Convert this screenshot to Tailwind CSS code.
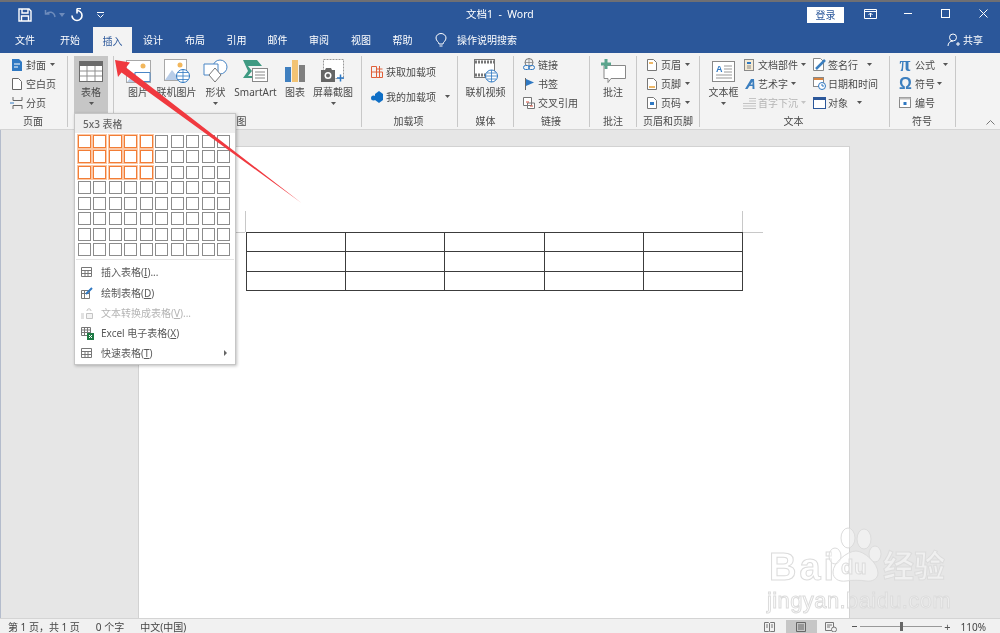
<!DOCTYPE html>
<html lang="zh-CN">
<head>
  <meta charset="UTF-8">
  <title>文档1 - Word</title>
  <script src="https://cdn.jsdelivr.net/npm/@tailwindcss/browser@4"></script>
</head>
<body class="relative w-[1000px] h-[633px] overflow-hidden bg-[#e6e6e6] text-[10px] leading-[12px] text-[#4a4a4a] font-['Noto_Sans','Noto_Sans_CJK_SC',sans-serif] blur-[0.35px]">
  <div class="flex flex-col h-full">

    <!-- Title bar -->
    <header class="relative h-[27px] flex items-center bg-[#2b579a] text-white border-t-2 border-[#6f6f73]">
      <svg class="ml-[18px] w-[14px] h-[14px]" viewBox="0 0 14 14" fill="none" stroke="#fff" stroke-width="1.4"><path d="M1 1h10l2 2v10H1zM4 1v4h6V1M3.500 13V8h7v5"/></svg>
      <svg class="ml-[12px] w-[14px] h-[12px]" viewBox="0 0 14 12" fill="none" stroke="#6d8bbb" stroke-width="1.5"><path d="M1.500 1v4h4M2 5c3-3 8-2.500 9 3"/></svg>
      <svg class="ml-[1px] w-[6px] h-[4px]" viewBox="0 0 6 4" fill="#6d8bbb"><path d="M0 0h6L3 4z"/></svg>
      <svg class="ml-[5px] w-[13px] h-[14px]" viewBox="0 0 13 14" fill="none" stroke="#fff" stroke-width="1.6"><path d="M7 2.500a5 5 0 1 1-5 5M7 .5v5M7 .5l4 0"/></svg>
      <svg class="ml-[14px] w-[7px] h-[6px]" viewBox="0 0 7 6" fill="none" stroke="#fff"><path d="M0 .5h7M.5 2.500 3.500 5.500 6.500 2.500"/></svg>
      <div class="absolute left-[466px] top-[6px] text-[10.5px] whitespace-pre">文档1  -  Word</div>
      <div class="absolute left-[807px] top-[5px] w-[37px] h-[16px] bg-white text-[#2b579a] flex items-center justify-center">登录</div>
      <svg class="absolute left-[864px] top-[7px] w-[13px] h-[11px]" viewBox="0 0 13 11" fill="none" stroke="#fff"><path d="M.5.5h12v9H.5zM.5 2.500h12"/><path d="M6.500 8V4M4.500 6l2-2 2 2"/></svg>
      <div class="absolute left-[904px] top-[11px] w-[8px] h-px bg-white"></div>
      <div class="absolute left-[941px] top-[7px] w-[9px] h-[9px] border border-white"></div>
      <svg class="absolute left-[979px] top-[7px] w-[9px] h-[9px]" viewBox="0 0 9 9" stroke="#fff"><path d="M.5.5l8 8M8.500.5l-8 8"/></svg>
    </header>

    <!-- Tabs -->
    <nav class="relative h-[26px] flex items-center bg-[#2b579a] text-white">
      <div class="ml-[4px] w-[42px] text-center">文件</div>
      <div class="ml-[3px] w-[42px] text-center">开始</div>
      <div class="ml-[2px] w-[39px] h-[26px] pt-[8px] bg-[#f3f3f3] text-[#2b579a] text-center">插入</div>
      <div class="w-[42px] text-center">设计</div>
      <div class="w-[42px] text-center">布局</div>
      <div class="w-[41px] text-center">引用</div>
      <div class="w-[41px] text-center">邮件</div>
      <div class="w-[42px] text-center">审阅</div>
      <div class="w-[42px] text-center">视图</div>
      <div class="w-[41px] text-center">帮助</div>
      <svg class="ml-[12px] w-[12px] h-[15px]" viewBox="0 0 12 15" fill="none" stroke="#fff"><path d="M4 11c0-2-3-3-3-6a5 4.500 0 0 1 10 0c0 3-3 4-3 6zM4.500 13h3"/></svg>
      <div class="ml-[10px]">操作说明搜索</div>
      <div class="ml-auto mr-[17px] flex items-center gap-[3px]">
        <svg class="w-[13px] h-[14px]" viewBox="0 0 13 14" fill="none" stroke="#fff"><circle cx="6" cy="4.500" r="3.500"/><path d="M1 13c0-3 2-5 5-5M9 11h4M11 9v4"/></svg>
        共享
      </div>
    </nav>

    <!-- Ribbon -->
    <section class="relative h-[77px] flex items-start pt-[3px] bg-[#f3f3f3] border-b border-[#d4d4d4]">

      <!-- 页面 -->
      <div class="w-[68px] h-[71px] flex flex-col border-r border-[#c8c8c8]">
        <div class="h-[60px] -mt-[1px] pl-[12px]">
          <div class="h-[19px] flex items-center gap-[4px]">
            <svg class="w-[10px] h-[12px]" viewBox="0 0 10 12"><path d="M0 0h7l3 3v9H0z" fill="#2f78c2"/><path d="M2 5h6M2 8h4" stroke="#fff"/></svg>
            <span>封面</span><svg class="w-[5px] h-[3px]" viewBox="0 0 5 3" fill="#555"><path d="M0 0h5L2.500 3z"/></svg>
          </div>
          <div class="h-[19px] flex items-center gap-[4px]">
            <svg class="w-[10px] h-[12px]" viewBox="0 0 10 12" fill="#fff" stroke="#666"><path d="M.5.5h6l3 3v8H.5z"/></svg>
            <span>空白页</span>
          </div>
          <div class="h-[19px] flex items-center gap-[3px] -ml-[2px]">
            <svg class="w-[13px] h-[12px]" viewBox="0 0 13 12" fill="none" stroke="#666"><path d="M3 0v3.500h9V0M3 12V8.500h9V12"/><path d="M0 6h4" stroke="#2f78c2"/></svg>
            <span>分页</span>
          </div>
        </div>
        <div class="h-[12px] text-center pr-[1px]">页面</div>
      </div>

      <!-- 表格 -->
      <div class="w-[46px] h-[71px] border-r border-[#c8c8c8]">
        <div class="ml-[6px] w-[34px] h-[57px] bg-[#c6c6c6] flex flex-col items-center">
          <div class="h-[30px] flex items-center">
            <svg class="w-[24px] h-[21px]" viewBox="0 0 24 21"><rect width="24" height="21" fill="#6b6b6b"/><rect x="1" y="5" width="22" height="15" fill="#fff"/><path d="M8 5v15M16 5v15M1 10h22M1 15h22" stroke="#8f8f8f"/></svg>
          </div>
          <div>表格</div>
          <svg class="w-[5px] h-[3px] mt-[4px]" viewBox="0 0 5 3" fill="#555"><path d="M0 0h5L2.500 3z"/></svg>
        </div>
      </div>

      <!-- 插图 -->
      <div class="w-[248px] h-[71px] flex flex-col border-r border-[#c8c8c8]">
        <div class="h-[59px] flex pl-[5px]">
          <div class="w-[38px] flex flex-col items-center">
            <div class="h-[30px] flex items-center">
              <svg class="w-[25px] h-[23px]" viewBox="0 0 25 23"><rect x=".5" y=".5" width="24" height="22" fill="#fff" stroke="#a8a8a8"/><circle cx="17" cy="6" r="2.500" fill="#f2b75c"/><path d="M1 22l8-10 7 10z" fill="#b8cde8"/><path d="M9 12.500h15v9H9z" fill="#fff" stroke="#4a86c5"/></svg>
            </div>
            <div>图片</div>
          </div>
          <div class="w-[39px] flex flex-col items-center">
            <div class="h-[30px] flex items-center">
              <svg class="w-[26px] h-[24px]" viewBox="0 0 26 24"><rect x=".5" y=".5" width="22" height="21" fill="#fff" stroke="#a8a8a8"/><circle cx="16" cy="6" r="2.500" fill="#f2b75c"/><path d="M1 21l7-10 8 10z" fill="#b8cde8"/><circle cx="19" cy="17" r="6.500" fill="#fff" stroke="#2f78c2"/><path d="M12.500 17h13M19 10.500v13M14 13.500h10M14 20.500h10" stroke="#2f78c2" stroke-width=".8"/></svg>
            </div>
            <div class="whitespace-nowrap">联机图片</div>
          </div>
          <div class="w-[39px] flex flex-col items-center">
            <div class="h-[30px] flex items-center">
              <svg class="w-[25px] h-[24px]" viewBox="0 0 25 24" fill="#fff" stroke="#4a86c5"><circle cx="17" cy="8" r="7"/><path d="M1 5h14v11H1z"/><path d="M12 9l6 7-6 7-6-7z" stroke="#777"/></svg>
            </div>
            <div>形状</div>
            <svg class="w-[5px] h-[3px] mt-[4px]" viewBox="0 0 5 3" fill="#555"><path d="M0 0h5L2.500 3z"/></svg>
          </div>
          <div class="w-[41px] flex flex-col items-center">
            <div class="h-[30px] flex items-center">
              <svg class="w-[25px] h-[22px]" viewBox="0 0 25 22"><path d="M0 0h14l5 6H5l4 5-4 5h8v2H0l5-7z" fill="#3f9a82"/><rect x="9.500" y="8.500" width="15" height="13" fill="#fff" stroke="#888"/><path d="M12 12h10M12 15h10M12 18h10" stroke="#888"/></svg>
            </div>
            <div>SmartArt</div>
          </div>
          <div class="w-[38px] flex flex-col items-center">
            <div class="h-[30px] flex items-center">
              <svg class="w-[20px] h-[22px]" viewBox="0 0 20 22"><rect x="0" y="7" width="6" height="15" fill="#3f7fbf"/><rect x="7" y="0" width="6" height="22" fill="#f2c374"/><rect x="14" y="5" width="6" height="17" fill="#7f7f7f"/></svg>
            </div>
            <div>图表</div>
          </div>
          <div class="w-[38px] flex flex-col items-center">
            <div class="h-[30px] flex items-center">
              <svg class="w-[24px] h-[24px]" viewBox="0 0 24 24"><rect x="2.500" y=".5" width="20" height="19" fill="#fff" stroke="#999" stroke-dasharray="2 1"/><path d="M0 11h4l1-2h5l1 2h3v12H0z" fill="#666"/><circle cx="7" cy="16.500" r="3.500" fill="#fff"/><circle cx="7" cy="16.500" r="2" fill="#666"/><path d="M16 19h7M19.500 15.500v7" stroke="#2f78c2" stroke-width="1.500"/></svg>
            </div>
            <div class="whitespace-nowrap">屏幕截图</div>
            <svg class="w-[5px] h-[3px] mt-[4px]" viewBox="0 0 5 3" fill="#555"><path d="M0 0h5L2.500 3z"/></svg>
          </div>
        </div>
        <div class="h-[12px] text-center pr-[2px]">插图</div>
      </div>

      <!-- 加载项 -->
      <div class="w-[96px] h-[71px] flex flex-col border-r border-[#c8c8c8]">
        <div class="h-[59px] pl-[9px] pt-[3px]">
          <div class="h-[25px] flex items-center gap-[3px]">
            <svg class="w-[12px] h-[12px]" viewBox="0 0 12 12" fill="none" stroke="#e0603a"><path d="M.5.5h5v11h-5zM.5 6h11M5.500 3h6M11.500 6v5.500h-6M8.500 0v12"/></svg>
            <span>获取加载项</span>
          </div>
          <div class="h-[25px] flex items-center gap-[3px]">
            <svg class="w-[12px] h-[12px]" viewBox="0 0 12 12" fill="#0f6fc6"><path d="M4 3l4-3 4 3v6l-4 3-4-3z"/><circle cx="2.500" cy="7" r="2.500"/></svg>
            <span>我的加载项</span><svg class="w-[5px] h-[3px] ml-[6px]" viewBox="0 0 5 3" fill="#555"><path d="M0 0h5L2.500 3z"/></svg>
          </div>
        </div>
        <div class="h-[12px] text-center pr-[2px]">加载项</div>
      </div>

      <!-- 媒体 -->
      <div class="w-[56px] h-[71px] flex flex-col border-r border-[#c8c8c8]">
        <div class="h-[59px] flex flex-col items-center">
          <div class="h-[30px] flex items-center">
            <svg class="w-[24px] h-[24px]" viewBox="0 0 24 24"><rect x=".5" y=".5" width="20" height="18" fill="#fff" stroke="#777"/><path d="M1 3h19M1 16h19" stroke="#777" stroke-width="3" stroke-dasharray="2 1"/><circle cx="17.500" cy="17" r="6" fill="#fff" stroke="#2f78c2"/><path d="M11.500 17h12M17.500 11v12M13 14h9M13 20h9" stroke="#2f78c2" stroke-width=".8"/></svg>
          </div>
          <div class="whitespace-nowrap">联机视频</div>
        </div>
        <div class="h-[12px] text-center">媒体</div>
      </div>

      <!-- 链接 -->
      <div class="w-[76px] h-[71px] flex flex-col border-r border-[#c8c8c8]">
        <div class="h-[60px] -mt-[1px] pl-[9px]">
          <div class="h-[19px] flex items-center gap-[3px]">
            <svg class="w-[12px] h-[13px]" viewBox="0 0 12 13" fill="none"><circle cx="6" cy="4.500" r="4" stroke="#777"/><path d="M2 4.500h8M6 .5v8" stroke="#777" stroke-width=".7"/><rect x=".5" y="7.500" width="6" height="4" rx="2" stroke="#2f78c2" fill="#f3f3f3"/><rect x="5.500" y="7.500" width="6" height="4" rx="2" stroke="#2f78c2"/></svg>
            <span>链接</span>
          </div>
          <div class="h-[19px] flex items-center gap-[4px] pl-[2px]">
            <svg class="w-[9px] h-[12px]" viewBox="0 0 9 12"><path d="M.5 0v12" stroke="#666"/><path d="M1 1l8 3.500L1 8z" fill="#2f78c2"/></svg>
            <span>书签</span>
          </div>
          <div class="h-[19px] flex items-center gap-[3px]">
            <svg class="w-[12px] h-[12px]" viewBox="0 0 12 12" fill="#fff" stroke="#777"><path d="M.5.5h8v8h-8zM4.500 6h7v5.500h-7z"/><path d="M3 5h3M7 9h3" stroke="#d8503f"/></svg>
            <span class="whitespace-nowrap">交叉引用</span>
          </div>
        </div>
        <div class="h-[12px] text-center pr-[1px]">链接</div>
      </div>

      <!-- 批注 -->
      <div class="w-[47px] h-[71px] flex flex-col border-r border-[#c8c8c8]">
        <div class="h-[59px] flex flex-col items-center">
          <div class="h-[30px] flex items-center">
            <svg class="w-[25px] h-[24px]" viewBox="0 0 25 24"><path d="M3 6.500h21.500v13H10l-3 4v-4H3z" fill="#fff" stroke="#888"/><path d="M5 0v10M0 5h10" stroke="#5aa58d" stroke-width="3"/></svg>
          </div>
          <div>批注</div>
        </div>
        <div class="h-[12px] text-center">批注</div>
      </div>

      <!-- 页眉和页脚 -->
      <div class="w-[63px] h-[71px] flex flex-col border-r border-[#c8c8c8]">
        <div class="h-[60px] -mt-[1px] pl-[10px]">
          <div class="h-[19px] flex items-center gap-[4px]">
            <svg class="w-[10px] h-[12px]" viewBox="0 0 10 12"><path d="M.5.5h6l3 3v8h-9z" fill="#fff" stroke="#777"/><path d="M2 3h4v2H2z" fill="#eeb867"/></svg>
            <span>页眉</span><svg class="w-[5px] h-[3px]" viewBox="0 0 5 3" fill="#555"><path d="M0 0h5L2.500 3z"/></svg>
          </div>
          <div class="h-[19px] flex items-center gap-[4px]">
            <svg class="w-[10px] h-[12px]" viewBox="0 0 10 12"><path d="M.5.5h6l3 3v8h-9z" fill="#fff" stroke="#777"/><path d="M2 8h6v2H2z" fill="#eeb867"/></svg>
            <span>页脚</span><svg class="w-[5px] h-[3px]" viewBox="0 0 5 3" fill="#555"><path d="M0 0h5L2.500 3z"/></svg>
          </div>
          <div class="h-[19px] flex items-center gap-[4px]">
            <svg class="w-[10px] h-[12px]" viewBox="0 0 10 12"><path d="M.5.5h6l3 3v8h-9z" fill="#fff" stroke="#777"/><path d="M3 5h4v3H3z" fill="#2f78c2"/></svg>
            <span>页码</span><svg class="w-[5px] h-[3px]" viewBox="0 0 5 3" fill="#555"><path d="M0 0h5L2.500 3z"/></svg>
          </div>
        </div>
        <div class="h-[12px] text-center whitespace-nowrap">页眉和页脚</div>
      </div>

      <!-- 文本 -->
      <div class="w-[190px] h-[71px] flex flex-col border-r border-[#c8c8c8]">
        <div class="h-[60px] -mt-[1px] flex">
          <div class="w-[44px] pl-[3px] pt-[1px] flex flex-col items-center">
            <div class="h-[30px] flex items-center">
              <svg class="w-[23px] h-[21px]" viewBox="0 0 23 21"><rect x=".5" y=".5" width="22" height="20" fill="#fff" stroke="#888"/><text x="4" y="11" font-size="9" font-weight="bold" fill="#2f78c2" font-family="Liberation Sans">A</text><path d="M12 5h8M12 8h8M12 11h8M4 14h16M4 17h16" stroke="#999"/></svg>
            </div>
            <div class="whitespace-nowrap">文本框</div>
            <svg class="w-[5px] h-[3px] mt-[4px]" viewBox="0 0 5 3" fill="#555"><path d="M0 0h5L2.500 3z"/></svg>
          </div>
          <div class="w-[69px]">
            <div class="h-[19px] flex items-center gap-[3px]">
              <svg class="w-[11px] h-[12px]" viewBox="0 0 11 12"><rect x=".5" y=".5" width="9" height="11" fill="#f4ead4" stroke="#888"/><path d="M3 3h4v2H3z" fill="#2f78c2"/><path d="M3 7h4M3 9h4" stroke="#888"/></svg>
              <span class="whitespace-nowrap">文档部件</span><svg class="w-[5px] h-[3px]" viewBox="0 0 5 3" fill="#555"><path d="M0 0h5L2.500 3z"/></svg>
            </div>
            <div class="h-[19px] flex items-center gap-[3px]">
              <svg class="w-[11px] h-[12px]" viewBox="0 0 11 12" fill="#3c7fbf"><path d="M1 11 7 1h3l.5 10H8.500V8H5.500l-2 3zM6.500 6.500h2V3.500z"/></svg>
              <span class="whitespace-nowrap">艺术字</span><svg class="w-[5px] h-[3px]" viewBox="0 0 5 3" fill="#555"><path d="M0 0h5L2.500 3z"/></svg>
            </div>
            <div class="h-[19px] flex items-center gap-[2px] -ml-[1px] text-[#b4b4b4]">
              <svg class="w-[13px] h-[12px]" viewBox="0 0 13 12" stroke="#c4c4c4"><path d="M6 1.500h7M6 4h7M0 6.500h13M0 9h13M0 11.500h13"/></svg>
              <span class="whitespace-nowrap">首字下沉</span><svg class="w-[5px] h-[3px] ml-[1px]" viewBox="0 0 5 3" fill="#c4c4c4"><path d="M0 0h5L2.500 3z"/></svg>
            </div>
          </div>
          <div class="w-[75px]">
            <div class="h-[19px] flex items-center gap-[2px]">
              <svg class="w-[13px] h-[13px]" viewBox="0 0 13 13"><path d="M.5.5h7l3 3v9H.5z" fill="#fff" stroke="#888"/><path d="M3 11l9-9" stroke="#3c7fbf" stroke-width="2.500"/></svg>
              <span class="whitespace-nowrap">签名行</span><svg class="w-[5px] h-[3px] ml-[7px]" viewBox="0 0 5 3" fill="#555"><path d="M0 0h5L2.500 3z"/></svg>
            </div>
            <div class="h-[19px] flex items-center gap-[2px]">
              <svg class="w-[13px] h-[13px]" viewBox="0 0 13 13"><rect x=".5" y=".5" width="10" height="9" fill="#fff" stroke="#888"/><path d="M1 1h9v2H1z" fill="#d8843f"/><circle cx="9" cy="9" r="3.500" fill="#fff" stroke="#2f78c2"/><path d="M9 7v2h2" stroke="#2f78c2" fill="none"/></svg>
              <span class="whitespace-nowrap">日期和时间</span>
            </div>
            <div class="h-[19px] flex items-center gap-[2px]">
              <svg class="w-[13px] h-[12px]" viewBox="0 0 13 12"><rect x=".5" y=".5" width="12" height="11" fill="#fff" stroke="#2b579a"/><path d="M1 1h11v2H1z" fill="#2b579a"/></svg>
              <span class="whitespace-nowrap">对象</span><svg class="w-[5px] h-[3px] ml-[7px]" viewBox="0 0 5 3" fill="#555"><path d="M0 0h5L2.500 3z"/></svg>
            </div>
          </div>
        </div>
        <div class="h-[12px] text-center pr-[2px]">文本</div>
      </div>

      <!-- 符号 -->
      <div class="w-[66px] h-[71px] flex flex-col border-r border-[#c8c8c8]">
        <div class="h-[60px] -mt-[1px] pl-[9px]">
          <div class="h-[19px] flex items-center gap-[4px]">
            <span class="w-[12px] text-center text-[20px] leading-[19px] font-bold text-[#3c7fbf] font-['Liberation_Serif',serif]">π</span>
            <span>公式</span><svg class="w-[5px] h-[3px] ml-[4px]" viewBox="0 0 5 3" fill="#555"><path d="M0 0h5L2.500 3z"/></svg>
          </div>
          <div class="h-[19px] flex items-center gap-[4px]">
            <span class="w-[12px] text-center text-[16px] leading-[19px] font-bold text-[#3c7fbf] font-['Liberation_Sans',sans-serif]">Ω</span>
            <span>符号</span><svg class="w-[5px] h-[3px] -ml-[2px]" viewBox="0 0 5 3" fill="#555"><path d="M0 0h5L2.500 3z"/></svg>
          </div>
          <div class="h-[19px] flex items-center gap-[4px]">
            <svg class="w-[12px] h-[11px]" viewBox="0 0 12 11"><rect x=".5" y=".5" width="11" height="10" fill="#fff" stroke="#888"/><path d="M.5.5h11v2H.5z" fill="#bbb"/><rect x="4.500" y="5" width="3" height="3" fill="#2f78c2"/></svg>
            <span>编号</span>
          </div>
        </div>
        <div class="h-[12px] text-center pr-[1px]">符号</div>
      </div>

      <svg class="absolute left-[986px] top-[67px] w-[9px] h-[5px]" viewBox="0 0 9 5" fill="none" stroke="#777"><path d="M.5 4.500l4-4 4 4"/></svg>
    </section>

    <!-- Document area -->
    <main class="relative flex-1 bg-[#e6e6e6] border-l border-[#b4bccc] overflow-hidden pl-[137px] pt-[16px]">
      <div class="relative w-[712px] h-[480px] bg-white border border-[#d2d2d2] pl-[107px] pt-[85px]">
        <table class="w-[497px] h-[59px] table-fixed border-collapse">
          <tr><td class="border border-[#3c3c3c]"></td><td class="border border-[#3c3c3c]"></td><td class="border border-[#3c3c3c]"></td><td class="border border-[#3c3c3c]"></td><td class="border border-[#3c3c3c]"></td></tr>
          <tr><td class="border border-[#3c3c3c]"></td><td class="border border-[#3c3c3c]"></td><td class="border border-[#3c3c3c]"></td><td class="border border-[#3c3c3c]"></td><td class="border border-[#3c3c3c]"></td></tr>
          <tr><td class="border border-[#3c3c3c]"></td><td class="border border-[#3c3c3c]"></td><td class="border border-[#3c3c3c]"></td><td class="border border-[#3c3c3c]"></td><td class="border border-[#3c3c3c]"></td></tr>
        </table>
        <!-- crop marks -->
        <div class="absolute left-[106px] top-[64px] w-px h-[21px] bg-[#c8c8c8]"></div>
        <div class="absolute left-[88px] top-[85px] w-[18px] h-px bg-[#c8c8c8]"></div>
        <div class="absolute left-[603px] top-[64px] w-px h-[21px] bg-[#c8c8c8]"></div>
        <div class="absolute left-[604px] top-[85px] w-[20px] h-px bg-[#c8c8c8]"></div>
      </div>
    </main>

    <!-- Status bar -->
    <footer class="relative h-[15px] flex items-center bg-[#f1f1f1] border-t border-[#d4d4d4] text-[10px] text-[#444] pl-[8px] pt-[1px]">
      <span class="whitespace-pre">第 1 页，共 1 页</span>
      <span class="ml-[16px] whitespace-pre">0 个字</span>
      <span class="ml-[16px]">中文(中国)</span>
      <div class="ml-auto flex items-center h-full">
        <svg class="w-[11px] h-[10px]" viewBox="0 0 11 10" fill="none" stroke="#777"><path d="M.5.5h4l1 1 1-1h4v9h-4l-1-.5-1 .5h-4zM5.500 1.500v8M2 3h2M2 5h2M7 3h2M7 5h2"/></svg>
        <div class="ml-[11px] w-[31px] h-full bg-[#c6c6c6] flex items-center justify-center">
          <svg class="w-[10px] h-[10px]" viewBox="0 0 10 10" fill="none" stroke="#666"><path d="M.5.5h9v9h-9zM2 3h6M2 5h6M2 7h6"/></svg>
        </div>
        <svg class="ml-[8px] w-[12px] h-[10px]" viewBox="0 0 12 10" fill="none" stroke="#777"><path d="M.5.5h8v8h-8zM2 3h5M2 5h3"/><circle cx="9" cy="7.500" r="2.500" fill="#f1f1f1"/></svg>
        <div class="ml-[15px] w-[5px] h-px bg-[#555]"></div>
        <div class="relative ml-[3px] w-[82px] h-px bg-[#999]">
          <div class="absolute left-[40px] -top-[4px] w-[3px] h-[9px] bg-[#666]"></div>
        </div>
        <span class="ml-[2px] w-[8px] text-center text-[11px] text-[#555]">+</span>
        <span class="ml-[9px] mr-[14px]">110%</span>
      </div>
    </footer>
  </div>

  <!-- Insert table dropdown -->
  <div class="absolute left-[74px] top-[113px] w-[162px] h-[252px] bg-white border border-[#c6c6c6] text-[#595959] shadow-[1px_1px_3px_rgba(0,0,0,0.25)]">
    <div class="h-[19px] pl-[8px] flex items-center bg-[#eeeeee] font-medium text-[#666]">5x3 表格</div>
    <div id="picker" class="grid grid-cols-[repeat(10,13px)] auto-rows-[13px] gap-[2.450px] pl-[3px] pt-[2px]"></div>
    <div class="mt-[3px] mx-[1px] h-px bg-[#e4e4e4]"></div>
    <div class="pt-[2px]">
      <div class="h-[20.300px] flex items-center pl-[5px] gap-[5px]">
        <svg class="w-[11px] h-[10px] ml-[1px]" viewBox="0 0 11 10" fill="#fff" stroke="#777"><path d="M.5.5h10v9H.5zM.5 3.500h10M.5 6.500h10M4 3.500v6M7 3.500v6"/></svg>
        <span class="ml-[4px]">插入表格(<u>I</u>)...</span>
      </div>
      <div class="h-[20.300px] flex items-center pl-[5px] gap-[5px]">
        <svg class="w-[12px] h-[12px] ml-[1px]" viewBox="0 0 12 12" fill="#fff" stroke="#777"><path d="M.5 3.500h8v8h-8zM.5 6.500h8M3.500 3.500v8"/><path d="M5 7l6-6" stroke="#2f78c2" stroke-width="2"/></svg>
        <span class="ml-[3px]">绘制表格(<u>D</u>)</span>
      </div>
      <div class="h-[20.300px] flex items-center pl-[5px] gap-[5px] text-[#b4b4b4]">
        <svg class="w-[12px] h-[12px] ml-[1px]" viewBox="0 0 12 12" fill="#f3f3f3" stroke="#c4c4c4"><path d="M5.500 6.500h6v5h-6zM0 7h3M0 9h3M0 11h3M6 4c0-3 4-3 4 0"/></svg>
        <span class="ml-[3px]">文本转换成表格(<u>V</u>)...</span>
      </div>
      <div class="h-[20.300px] flex items-center pl-[5px] gap-[5px]">
        <svg class="w-[13px] h-[13px] ml-[1px]" viewBox="0 0 13 13"><path d="M.5.5h9v8h-9zM.5 3h9M.5 5.500h9M3.500.5v8M6.500.5v8" fill="#fff" stroke="#777"/><rect x="6" y="6" width="7" height="7" fill="#1f7a45"/><path d="M8 8l3 3M11 8l-3 3" stroke="#fff"/></svg>
        <span class="ml-[2px] whitespace-pre">Excel 电子表格(<u>X</u>)</span>
      </div>
      <div class="relative h-[20.300px] flex items-center pl-[5px] gap-[5px]">
        <svg class="w-[11px] h-[10px] ml-[1px]" viewBox="0 0 11 10" fill="#fff" stroke="#777"><path d="M.5.5h10v9H.5zM.5 3.500h10M.5 6.500h10M4 3.500v6M7 3.500v6"/></svg>
        <span class="ml-[4px]">快速表格(<u>T</u>)</span>
        <svg class="absolute right-[8px] top-[7px] w-[3px] h-[6px]" viewBox="0 0 3 6" fill="#666"><path d="M0 0l3 3-3 3z"/></svg>
      </div>
    </div>
  </div>

  <!-- Red arrow annotation -->
  <svg class="absolute left-0 top-0 w-[1000px] h-[633px] pointer-events-none" viewBox="0 0 1000 633">
    <path d="M115 60 130 62.500 126 67.500 301.500 203 121.500 72.500 118 77z" fill="#f0393f"/>
  </svg>

  <!-- Watermark -->
  <div class="absolute left-[769px] top-[527px] w-[180px] h-[86px] text-white/40 [-webkit-text-stroke:1px_#dcdcdc] font-['Liberation_Sans','Noto_Sans_CJK_SC',sans-serif]">
    <div class="flex items-end h-[56px]">
      <span class="w-[59px] text-[38px] leading-[32px] font-bold tracking-[3px]">Bai</span>
      <div class="relative w-[54px] h-[56px]">
        <svg class="absolute inset-0 w-[54px] h-[56px]" viewBox="0 0 54 56" fill="rgba(255,255,255,0.4)" stroke="#dcdcdc"><ellipse cx="7" cy="29" rx="6" ry="8"/><ellipse cx="20" cy="11" rx="7" ry="10"/><ellipse cx="36" cy="12" rx="7" ry="10"/><ellipse cx="47" cy="27" rx="6" ry="8"/><path d="M28 24c8 0 22 12 22 22 0 6-6 9-12 8-6-1-14-1-20 0-7 1-13-2-13-9 0-9 14-21 23-21z"/></svg>
        <span class="absolute left-[13px] top-[30px] text-[20px] leading-[20px] font-bold tracking-[1px]">du</span>
      </div>
      <span class="ml-[1px] text-[31px] leading-[32px] font-bold">经验</span>
    </div>
    <div class="mt-[6px] -ml-[2px] text-[22px] leading-[24px] tracking-[0.4px] whitespace-nowrap">jingyan.baidu.com</div>
  </div>

  <script>
    // 10 x 8 picker, first 5 x 3 cells hovered
    const picker = document.getElementById('picker');
    for (let row = 0; row < 8; row++) {
      for (let col = 0; col < 10; col++) {
        const cell = document.createElement('div');
        cell.className = (row < 3 && col < 5)
          ? 'bg-white border border-[#f27d36] ring-1 ring-[#fbc8a6]'
          : 'bg-white border border-[#8c8c8c]';
        picker.appendChild(cell);
      }
    }
  </script>
</body>
</html>
